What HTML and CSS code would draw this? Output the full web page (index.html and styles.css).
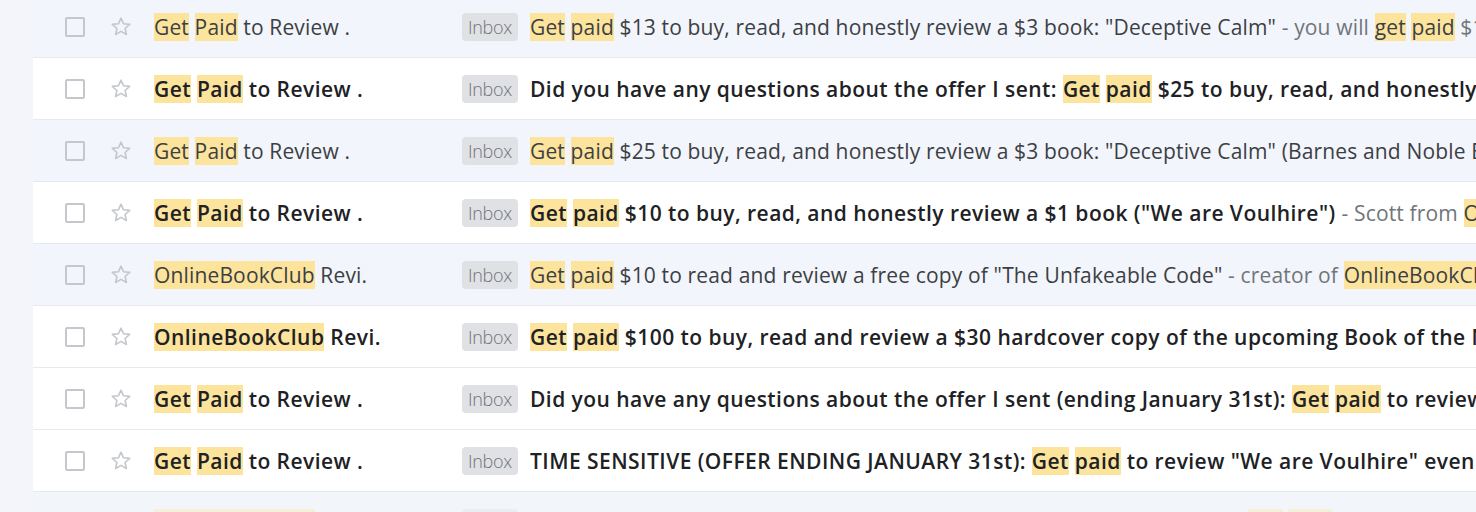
FILE: index.html
```html
<!DOCTYPE html>
<html lang="en">
<head>
<title>Inbox</title>
<meta charset="utf-8">
<link rel="stylesheet" href="styles.css">
</head>
<body>
<div id="list">

<div class="row read">
<span class="check"></span>
<svg class="star" viewBox="0 0 24 24"><path d="M12 3.2l2.6 5.6 6.1.6-4.6 4.1 1.3 6-5.4-3.1-5.4 3.1 1.3-6-4.6-4.1 6.1-.6z"/></svg>
<div class="sender"><mark>Get</mark> <mark>Paid</mark> to Review .</div>
<span class="badge">Inbox</span>
<div class="text"><span class="subject"><mark>Get</mark> <mark>paid</mark> $13 to buy, read, and honestly review a $3 book: "Deceptive Calm"</span> <span class="snippet">- you will <mark>get</mark> <mark>paid</mark> $13 to buy and review the book</span></div>
</div>

<div class="row">
<span class="check"></span>
<svg class="star" viewBox="0 0 24 24"><path d="M12 3.2l2.6 5.6 6.1.6-4.6 4.1 1.3 6-5.4-3.1-5.4 3.1 1.3-6-4.6-4.1 6.1-.6z"/></svg>
<div class="sender"><mark>Get</mark> <mark>Paid</mark> to Review .</div>
<span class="badge">Inbox</span>
<div class="text"><span class="subject">Did you have any questions about the offer I sent: <mark>Get</mark> <mark>paid</mark> $25 to buy, read, and honestly review</span></div>
</div>

<div class="row read">
<span class="check"></span>
<svg class="star" viewBox="0 0 24 24"><path d="M12 3.2l2.6 5.6 6.1.6-4.6 4.1 1.3 6-5.4-3.1-5.4 3.1 1.3-6-4.6-4.1 6.1-.6z"/></svg>
<div class="sender"><mark>Get</mark> <mark>Paid</mark> to Review .</div>
<span class="badge">Inbox</span>
<div class="text"><span class="subject"><mark>Get</mark> <mark>paid</mark> $25 to buy, read, and honestly review a $3 book: "Deceptive Calm" (Barnes and Noble Edition)</span></div>
</div>

<div class="row">
<span class="check"></span>
<svg class="star" viewBox="0 0 24 24"><path d="M12 3.2l2.6 5.6 6.1.6-4.6 4.1 1.3 6-5.4-3.1-5.4 3.1 1.3-6-4.6-4.1 6.1-.6z"/></svg>
<div class="sender"><mark>Get</mark> <mark>Paid</mark> to Review .</div>
<span class="badge">Inbox</span>
<div class="text"><span class="subject"><mark>Get</mark> <mark>paid</mark> $10 to buy, read, and honestly review a $1 book ("We are Voulhire")</span> <span class="snippet">- Scott from <mark>OnlineBookClub</mark></span></div>
</div>

<div class="row read">
<span class="check"></span>
<svg class="star" viewBox="0 0 24 24"><path d="M12 3.2l2.6 5.6 6.1.6-4.6 4.1 1.3 6-5.4-3.1-5.4 3.1 1.3-6-4.6-4.1 6.1-.6z"/></svg>
<div class="sender"><mark>OnlineBookClub</mark> Revi.</div>
<span class="badge">Inbox</span>
<div class="text"><span class="subject"><mark>Get</mark> <mark>paid</mark> $10 to read and review a free copy of "The Unfakeable Code"</span> <span class="snippet">- creator of <mark>OnlineBookClub</mark></span></div>
</div>

<div class="row">
<span class="check"></span>
<svg class="star" viewBox="0 0 24 24"><path d="M12 3.2l2.6 5.6 6.1.6-4.6 4.1 1.3 6-5.4-3.1-5.4 3.1 1.3-6-4.6-4.1 6.1-.6z"/></svg>
<div class="sender"><mark>OnlineBookClub</mark> Revi.</div>
<span class="badge">Inbox</span>
<div class="text"><span class="subject"><mark>Get</mark> <mark>paid</mark> $100 to buy, read and review a $30 hardcover copy of the upcoming Book of the Month</span></div>
</div>

<div class="row">
<span class="check"></span>
<svg class="star" viewBox="0 0 24 24"><path d="M12 3.2l2.6 5.6 6.1.6-4.6 4.1 1.3 6-5.4-3.1-5.4 3.1 1.3-6-4.6-4.1 6.1-.6z"/></svg>
<div class="sender"><mark>Get</mark> <mark>Paid</mark> to Review .</div>
<span class="badge">Inbox</span>
<div class="text"><span class="subject">Did you have any questions about the offer I sent (ending January 31st): <mark>Get</mark> <mark>paid</mark> to review</span></div>
</div>

<div class="row">
<span class="check"></span>
<svg class="star" viewBox="0 0 24 24"><path d="M12 3.2l2.6 5.6 6.1.6-4.6 4.1 1.3 6-5.4-3.1-5.4 3.1 1.3-6-4.6-4.1 6.1-.6z"/></svg>
<div class="sender"><mark>Get</mark> <mark>Paid</mark> to Review .</div>
<span class="badge">Inbox</span>
<div class="text"><span class="subject">TIME SENSITIVE (OFFER ENDING JANUARY 31st): <mark>Get</mark> <mark>paid</mark> to review "We are Voulhire" even</span></div>
</div>

<div class="row read faded">
<span class="check"></span>
<svg class="star" viewBox="0 0 24 24"><path d="M12 3.2l2.6 5.6 6.1.6-4.6 4.1 1.3 6-5.4-3.1-5.4 3.1 1.3-6-4.6-4.1 6.1-.6z"/></svg>
<div class="sender"><mark>OnlineBookClub</mark> Revi.</div>
<span class="badge">Inbox</span>
<div class="text"><span class="subject">Did you have any questions about the offer I sent for this month's book: <mark>Get</mark> <mark>paid</mark> to read</span></div>
</div>

</div>
</body>
</html>
```

FILE: styles.css
```css
body {
margin: 0;
background-color: #f3f5fa;
font-family: "Open Sans", Roboto, sans-serif;
font-size: 21px;
color: #202124;
overflow: hidden;
}
#list {
margin-top: -4px;
margin-left: 33px;
}
.row {
display: flex;
align-items: center;
height: 61px;
border-bottom: 1px solid #e6e9ee;
background-color: #fff;
white-space: nowrap;
overflow: hidden;
font-weight: 600;
letter-spacing: 0.45px;
}
.row.read {
background-color: #f2f5fb;
font-weight: normal;
color: #3c4043;
letter-spacing: 0.15px;
}
.row.faded {
opacity: .35;
}
.check {
flex: none;
width: 16px;
height: 16px;
margin-left: 32px;
border: 2px solid #c4c7cc;
border-radius: 2px;
}
.star {
flex: none;
width: 24px;
height: 24px;
margin-left: 24px;
fill: none;
stroke: #c4c7cc;
stroke-width: 1.6;
stroke-linejoin: round;
}
.sender {
flex: none;
width: 308px;
margin-left: 21px;
overflow: hidden;
}
mark {
background-color: #fde49d;
color: inherit;
padding: 0;
}
.badge {
flex: none;
width: 56px;
height: 28px;
line-height: 28px;
text-align: center;
border-radius: 4px;
background-color: #dfe1e4;
color: #6f7378;
font-size: 18px;
font-weight: 300;
letter-spacing: -0.3px;
}
.text {
margin-left: 12px;
overflow: hidden;
}
.snippet {
font-weight: normal;
color: #70757a;
letter-spacing: 0.15px;
}
.snippet mark {
color: #3c4043;
}
```
